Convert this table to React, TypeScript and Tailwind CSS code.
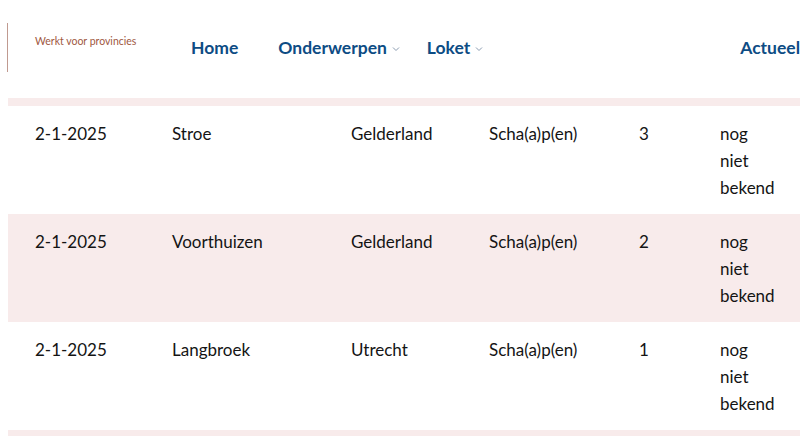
import React from 'react';

interface Row {
  date: string;
  place: string;
  province: string;
  animal: string;
  count: number;
  status: string;
}

const rows: Row[] = [
  { date: '2-1-2025', place: 'Stroe', province: 'Gelderland', animal: 'Scha(a)p(en)', count: 3, status: 'nog niet bekend' },
  { date: '2-1-2025', place: 'Voorthuizen', province: 'Gelderland', animal: 'Scha(a)p(en)', count: 2, status: 'nog niet bekend' },
  { date: '2-1-2025', place: 'Langbroek', province: 'Utrecht', animal: 'Scha(a)p(en)', count: 1, status: 'nog niet bekend' },
];

const Chevron: React.FC = () => (
  <svg width="8" height="6" viewBox="0 0 8 6" className="ml-[5px] mt-[1px]">
    <path d="M1 1.5 L4 4.5 L7 1.5" fill="none" stroke="#8a9bb0" strokeWidth="1" />
  </svg>
);

const App: React.FC = () => {
  return (
    <div
      className="w-[800px] h-[436px] overflow-hidden bg-white whitespace-nowrap"
      style={{ fontFamily: 'Lato, "Open Sans", sans-serif' }}
    >
      {/* Header */}
      <div className="h-[98px] flex items-center">
        <div className="ml-[7px] w-[184px] h-[49px] mt-[-4px] border-l border-[#c09a90] pl-[27px] pt-[12px]">
          <p className="text-[10.5px] leading-[12px] text-[#a0583f]">Werkt voor provincies</p>
        </div>
        <nav className="flex items-center text-[17.5px] font-bold text-[#0d4c84] mt-[-2px]">
          <span>Home</span>
          <span className="ml-[40px] flex items-center">
            Onderwerpen
            <Chevron />
          </span>
          <span className="ml-[27px] flex items-center">
            Loket
            <Chevron />
          </span>
          <span className="ml-[257px]">Actueel</span>
        </nav>
      </div>

      {/* Table */}
      <div className="ml-[8px] text-[17px] leading-[27px] text-[#141414]">
        <div className="h-[8px] bg-[#f8ebeb]" />
        {rows.map((row, i) => (
          <div
            key={i}
            className={`h-[108px] grid grid-cols-[164px_179px_138px_150px_81px_1fr] pt-[14px] ${
              i % 2 === 1 ? 'bg-[#f8ebeb]' : 'bg-white'
            }`}
          >
            <div className="pl-[27px]">{row.date}</div>
            <div>{row.place}</div>
            <div>{row.province}</div>
            <div>{row.animal}</div>
            <div>{row.count}</div>
            <div className="w-[60px] whitespace-normal">{row.status}</div>
          </div>
        ))}
        <div className="h-[8px] bg-[#f8ebeb]" />
      </div>
    </div>
  );
};

export default App;
